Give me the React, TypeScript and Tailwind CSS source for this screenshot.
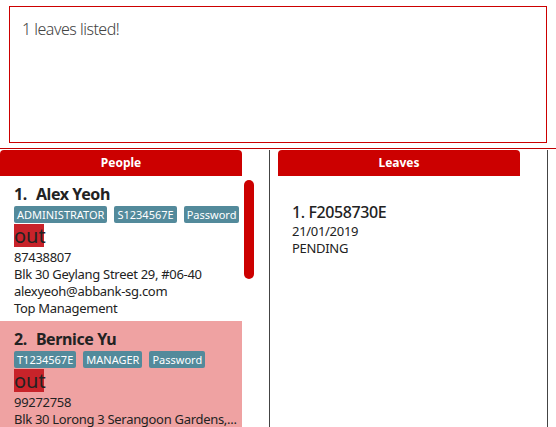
import React from 'react';

interface Person {
    name: string;
    tags: string[];
    phone: string;
    address: string;
    email?: string;
    department?: string;
}

const people: Person[] = [
    {
        name: 'Alex Yeoh',
        tags: ['ADMINISTRATOR', 'S1234567E', 'Password'],
        phone: '87438807',
        address: 'Blk 30 Geylang Street 29, #06-40',
        email: 'alexyeoh@abbank-sg.com',
        department: 'Top Management',
    },
    {
        name: 'Bernice Yu',
        tags: ['T1234567E', 'MANAGER', 'Password'],
        phone: '99272758',
        address: 'Blk 30 Lorong 3 Serangoon Gardens,...',
    },
];

const PersonCard: React.FC<{ person: Person; index: number; selected?: boolean }> = ({ person, index, selected }) => {
    return (
        <div className={`pl-[14px] pt-[7px] pb-[4px] ${selected ? 'bg-[#efa2a2]' : 'bg-white'}`}>
            <div className="text-[16px] font-bold leading-[22px] text-[#222] tracking-[-0.4px]">
                {index}.<span className="ml-[9px]">{person.name}</span>
            </div>
            <div className="flex gap-[7px] mt-[1px]">
                {person.tags.map((t) => (
                    <span key={t} className="bg-[#538a9b] text-white text-[11px] leading-[17px] px-[3px] rounded-[2px]">
                        {t}
                    </span>
                ))}
            </div>
            <div className="mt-[1px]">
                <span className="inline-block bg-[#c8232a] text-[#222] text-[20px] leading-[23px] w-[30px]">out</span>
            </div>
            <div className="text-[13px] leading-[17px] text-[#222] tracking-[-0.3px]">
                <div>{person.phone}</div>
                <div className="whitespace-nowrap">{person.address}</div>
                {person.email && <div>{person.email}</div>}
                {person.department && <div>{person.department}</div>}
            </div>
        </div>
    );
};

const Header: React.FC<{ title: string }> = ({ title }) => (
    <div className="h-[26px] bg-[#cc0000] rounded-t-[4px] flex items-center justify-center text-white text-[12px] font-bold">
        {title}
    </div>
);

export default function App() {
    return (
        <div className="w-[556px] h-[427px] overflow-hidden bg-white" style={{ fontFamily: '"Noto Sans", "Open Sans", sans-serif' }}>
            <div className="pt-[6px] pl-[9px] pr-[9px]">
                <div className="h-[137px] border border-[#cc0000] px-[12px] pt-[10px] text-[16px] font-light text-[#444] tracking-[-0.5px]">
                    1 leaves listed!
                </div>
            </div>
            <div className="mt-[5px] h-[2px] bg-[#c00000] w-full border-b border-b-white" />
            <div className="flex h-[300px]">
                <div className="w-[269px] flex">
                    <div className="w-[242px]">
                        <Header title="People" />
                        {people.map((p, i) => (
                            <PersonCard key={p.name} person={p} index={i + 1} selected={i === 1} />
                        ))}
                    </div>
                    <div className="ml-[2px] pt-[30px]">
                        <div className="w-[10px] h-[99px] bg-[#cc0000] rounded-[5px]" />
                    </div>
                </div>
                <div className="w-[1px] bg-[#444]" />
                <div className="w-[277px] pl-[8px] pr-[27px]">
                    <Header title="Leaves" />
                    <div className="pl-[14px] pt-[25px] text-[#222]">
                        <div className="text-[16px] leading-[22px] font-medium tracking-[-0.4px]">1. F2058730E</div>
                        <div className="text-[13px] leading-[17px] tracking-[-0.3px]">21/01/2019</div>
                        <div className="text-[13px] leading-[17px] tracking-[-0.3px]">PENDING</div>
                    </div>
                </div>
                <div className="w-[1px] bg-[#444]" />
            </div>
        </div>
    );
}
